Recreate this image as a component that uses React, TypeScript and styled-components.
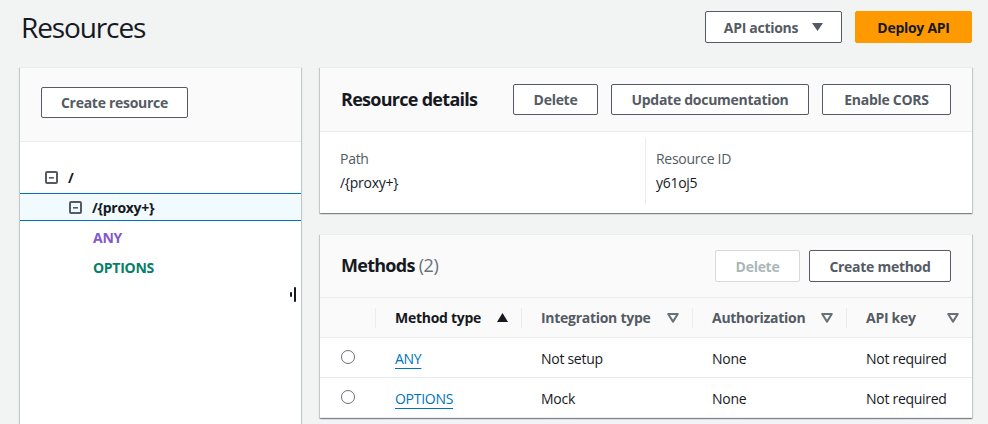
import React from "react";
import styled, { createGlobalStyle } from "styled-components";

const Global = createGlobalStyle`
  html, body { margin: 0; padding: 0; overflow: hidden; }
  body {
    background: #f2f3f3;
    font-family: "Open Sans", "Noto Sans", sans-serif;
    color: #16191f;
    font-size: 14px;
  }
  * { box-sizing: border-box; }
`;

const Page = styled.div`
  padding: 11px 16px 0 20px;
  width: 988px;
  height: 424px;
  overflow: hidden;
`;

const TopBar = styled.div`
  display: flex;
  align-items: center;
  justify-content: space-between;
  height: 32px;
`;

const Title = styled.h1`
  margin: 0 0 0 1px;
  font-size: 28px;
  font-weight: 400;
  line-height: 32px;
  letter-spacing: -0.04em;
  color: #16191f;
`;

const Actions = styled.div`
  display: flex;
  gap: 13px;
`;

const Button = styled.button<{ $primary?: boolean; $disabled?: boolean; $w?: number; $h?: number }>`
  height: ${(p) => p.$h ?? 31}px;
  width: ${(p) => (p.$w ? `${p.$w}px` : "auto")};
  padding: 0;
  display: inline-flex;
  align-items: center;
  justify-content: center;
  gap: 14px;
  white-space: nowrap;
  font-family: inherit;
  font-size: 14px;
  font-weight: 700;
  letter-spacing: -0.02em;
  border-radius: 2px;
  cursor: pointer;
  border: 1px solid ${(p) => (p.$primary ? "#ff9900" : p.$disabled ? "#d5dbdb" : "#545b64")};
  background: ${(p) => (p.$primary ? "#ff9900" : "#ffffff")};
  color: ${(p) => (p.$primary ? "#16191f" : p.$disabled ? "#aab7b8" : "#545b64")};
`;

const Main = styled.div`
  display: flex;
  gap: 19px;
  margin-top: 24px;
  align-items: flex-start;
`;

const Panel = styled.section`
  background: #ffffff;
  border-top: 1px solid #eaeded;
  box-shadow: 0 1px 1px 0 rgba(0, 28, 36, 0.3), 1px 1px 1px 0 rgba(0, 28, 36, 0.15),
    -1px 1px 1px 0 rgba(0, 28, 36, 0.15);
`;

const LeftPanel = styled(Panel)`
  width: 281px;
  height: 357px;
  position: relative;
`;

const LeftHeader = styled.div`
  height: 74px;
  background: #fafafa;
  border-bottom: 1px solid #eaeded;
  padding: 19px 0 0 21px;
`;

const Tree = styled.div`
  padding-top: 20px;
`;

const TreeRow = styled.div<{ $indent: number; $selected?: boolean }>`
  height: ${(p) => (p.$selected ? 28 : 30)}px;
  margin: ${(p) => (p.$selected ? "1px 0" : "0")};
  display: flex;
  align-items: center;
  gap: 10px;
  padding-left: ${(p) => p.$indent}px;
  background: ${(p) => (p.$selected ? "#f1faff" : "transparent")};
  border-top: ${(p) => (p.$selected ? "1px solid #0073bb" : "none")};
  border-bottom: ${(p) => (p.$selected ? "1px solid #0073bb" : "none")};
`;

const TreeLabel = styled.span<{ $color?: string }>`
  font-weight: 700;
  font-size: 14px;
  letter-spacing: -0.02em;
  color: ${(p) => p.$color ?? "#16191f"};
`;

const Handle = styled.div`
  position: absolute;
  left: 270px;
  top: 219px;
  display: flex;
  align-items: center;
  gap: 2px;
`;

const HandleBar = styled.span<{ $h: number }>`
  display: block;
  width: 2px;
  height: ${(p) => p.$h}px;
  background: #16191f;
  border-radius: 1px;
`;

const RightCol = styled.div`
  width: 652px;
  display: flex;
  flex-direction: column;
  gap: 21px;
`;

const PanelHeader = styled.div<{ $h: number }>`
  height: ${(p) => p.$h}px;
  background: #fafafa;
  border-bottom: 1px solid #eaeded;
  display: flex;
  align-items: center;
  justify-content: space-between;
  padding: 0 21px 0 21px;
`;

const PanelTitle = styled.h2`
  margin: 0 0 2px;
  font-size: 18px;
  font-weight: 700;
  letter-spacing: -0.04em;
  color: #16191f;
`;

const Count = styled.span`
  font-weight: 400;
  color: #687078;
  letter-spacing: -0.02em;
`;

const ButtonGroup = styled.div<{ $gap: number }>`
  display: flex;
  gap: ${(p) => p.$gap}px;
`;

const Details = styled.div`
  display: grid;
  grid-template-columns: 325px 1fr;
  padding: 6px 20px 8px 0;
`;

const DetailCol = styled.div<{ $divider?: boolean }>`
  padding: 10px 0 11px ${(p) => (p.$divider ? 10 : 20)}px;
  border-left: ${(p) => (p.$divider ? "1px solid #eaeded" : "none")};
  display: flex;
  flex-direction: column;
  gap: 2px;
`;

const Label = styled.div`
  color: #545b64;
  line-height: 22px;
  letter-spacing: -0.02em;
`;

const Value = styled.div`
  color: #16191f;
  line-height: 22px;
  letter-spacing: -0.02em;
`;

const Grid = styled.div`
  display: grid;
  grid-template-columns: 55px 146px 171px 154px 126px;
`;

const HeadCell = styled.div`
  height: 40px;
  background: #fafafa;
  border-bottom: 1px solid #eaeded;
  display: flex;
  align-items: center;
`;

const HeadInner = styled.div<{ $sorted?: boolean }>`
  flex: 1;
  height: 20px;
  border-left: 1px solid #eaeded;
  padding: 0 13px 0 19px;
  display: flex;
  align-items: center;
  justify-content: space-between;
  font-weight: 700;
  letter-spacing: -0.02em;
  color: ${(p) => (p.$sorted ? "#16191f" : "#545b64")};
`;

const Cell = styled.div<{ $center?: boolean }>`
  height: 40px;
  border-bottom: 1px solid #eaeded;
  display: flex;
  align-items: center;
  justify-content: ${(p) => (p.$center ? "center" : "flex-start")};
  padding-left: ${(p) => (p.$center ? 0 : 20)}px;
  padding-top: 1px;
  letter-spacing: -0.02em;
  color: #16191f;
`;

const Radio = styled.span`
  width: 14px;
  height: 14px;
  border-radius: 50%;
  border: 1.5px solid #687078;
  margin-left: 1px;
  margin-top: -2px;
`;

const Link = styled.a`
  color: #0073bb;
  text-decoration: underline;
  text-underline-offset: 4px;
  text-decoration-thickness: 1px;
`;

const MinusBox = () => (
  <svg width="13" height="13" viewBox="0 0 13 13">
    <rect x="1" y="1" width="11" height="11" rx="1" fill="none" stroke="#545b64" strokeWidth="2" />
    <rect x="4" y="6" width="5" height="1.6" fill="#545b64" />
  </svg>
);

const CaretDown = () => (
  <svg width="11" height="8" viewBox="0 0 11 8">
    <polygon points="0,0 11,0 5.5,8" fill="#545b64" />
  </svg>
);

const SortUp = () => (
  <svg width="11" height="9" viewBox="0 0 11 9">
    <polygon points="5.5,0 11,9 0,9" fill="#16191f" />
  </svg>
);

const SortNone = () => (
  <svg width="12" height="10" viewBox="0 0 12 10">
    <polygon points="1.2,1 10.8,1 6,8.6" fill="none" stroke="#687078" strokeWidth="2" strokeLinejoin="round" />
  </svg>
);

const rows = [
  { method: "ANY", integration: "Not setup", auth: "None", key: "Not required" },
  { method: "OPTIONS", integration: "Mock", auth: "None", key: "Not required" },
];

export default function App() {
  return (
    <>
      <Global />
      <Page>
        <TopBar>
          <Title>Resources</Title>
          <Actions>
            <Button $w={137} $h={32}>
              API actions <CaretDown />
            </Button>
            <Button $primary $w={117} $h={32}>
              Deploy API
            </Button>
          </Actions>
        </TopBar>
        <Main>
          <LeftPanel>
            <LeftHeader>
              <Button $w={147}>Create resource</Button>
            </LeftHeader>
            <Tree>
              <TreeRow $indent={25}>
                <MinusBox />
                <TreeLabel>/</TreeLabel>
              </TreeRow>
              <TreeRow $indent={49} $selected>
                <MinusBox />
                <TreeLabel>/{"{proxy+}"}</TreeLabel>
              </TreeRow>
              <TreeRow $indent={73}>
                <TreeLabel $color="#8456ce">ANY</TreeLabel>
              </TreeRow>
              <TreeRow $indent={73}>
                <TreeLabel $color="#067f68">OPTIONS</TreeLabel>
              </TreeRow>
            </Tree>
            <Handle>
              <HandleBar $h={5} />
              <HandleBar $h={15} />
            </Handle>
          </LeftPanel>
          <RightCol>
            <Panel>
              <PanelHeader $h={64}>
                <PanelTitle>Resource details</PanelTitle>
                <ButtonGroup $gap={13}>
                  <Button $w={85}>Delete</Button>
                  <Button $w={198}>Update documentation</Button>
                  <Button $w={129}>Enable CORS</Button>
                </ButtonGroup>
              </PanelHeader>
              <Details>
                <DetailCol>
                  <Label>Path</Label>
                  <Value>/{"{proxy+}"}</Value>
                </DetailCol>
                <DetailCol $divider>
                  <Label>Resource ID</Label>
                  <Value>y61oj5</Value>
                </DetailCol>
              </Details>
            </Panel>
            <Panel>
              <PanelHeader $h={63}>
                <PanelTitle>
                  Methods <Count>(2)</Count>
                </PanelTitle>
                <ButtonGroup $gap={9}>
                  <Button $disabled $w={85} $h={32}>
                    Delete
                  </Button>
                  <Button $w={142} $h={32}>
                    Create method
                  </Button>
                </ButtonGroup>
              </PanelHeader>
              <Grid>
                <HeadCell />
                <HeadCell>
                  <HeadInner $sorted>
                    Method type <SortUp />
                  </HeadInner>
                </HeadCell>
                <HeadCell>
                  <HeadInner>
                    Integration type <SortNone />
                  </HeadInner>
                </HeadCell>
                <HeadCell>
                  <HeadInner>
                    Authorization <SortNone />
                  </HeadInner>
                </HeadCell>
                <HeadCell>
                  <HeadInner>
                    API key <SortNone />
                  </HeadInner>
                </HeadCell>
                {rows.map((r) => (
                  <React.Fragment key={r.method}>
                    <Cell $center>
                      <Radio />
                    </Cell>
                    <Cell>
                      <Link>{r.method}</Link>
                    </Cell>
                    <Cell>{r.integration}</Cell>
                    <Cell>{r.auth}</Cell>
                    <Cell>{r.key}</Cell>
                  </React.Fragment>
                ))}
              </Grid>
            </Panel>
          </RightCol>
        </Main>
      </Page>
    </>
  );
}
